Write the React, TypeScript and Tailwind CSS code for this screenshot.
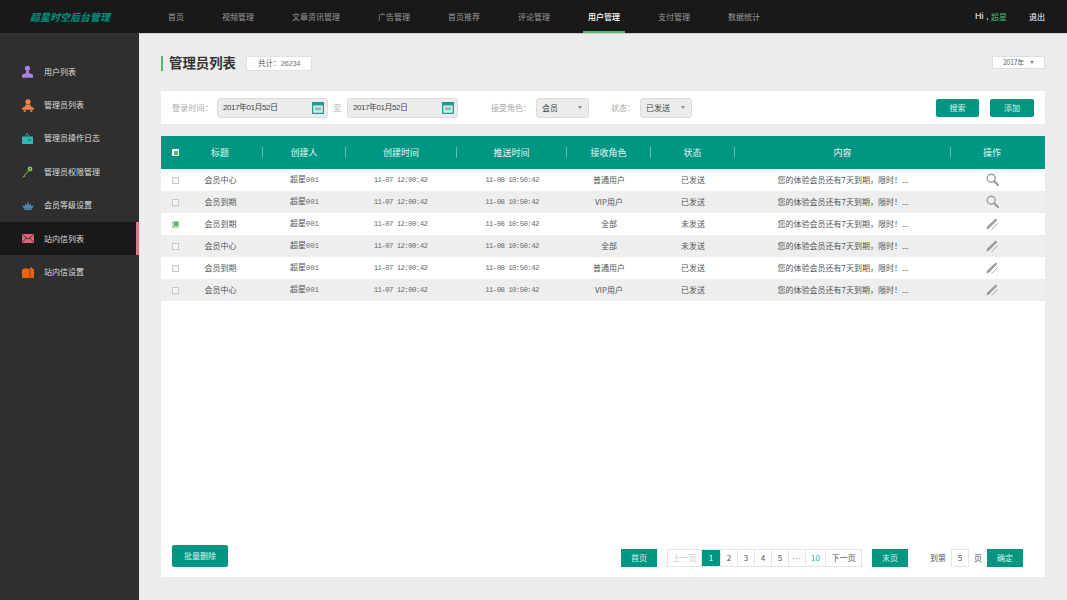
import React from "react";

const cn = "font-['Noto_Sans_CJK_SC',sans-serif]";
const mono = "font-['Liberation_Mono','Noto_Sans_CJK_SC',monospace]";

const navs = ["首页", "视频管理", "文章资讯管理", "广告管理", "首页推荐", "评论管理", "用户管理", "支付管理", "数据统计"];

const icons: Record<string, React.ReactNode> = {
  user: (
    <svg width="11" height="13" viewBox="0 0 12 14"><circle cx="6" cy="3.4" r="2.8" fill="#a97fe0" /><path d="M4.6 5.5h2.8l.4 3.3 3 .9c.8.3 1.2 1 1.2 1.8v2.2H0v-2.2c0-.8.4-1.5 1.2-1.8l3-.9z" fill="#a97fe0" /></svg>
  ),
  admin: (
    <svg width="12" height="13" viewBox="0 0 12 13"><circle cx="6" cy="2.8" r="2.6" fill="#f0844a" /><path d="M3.5 5.6h5l.3 2 2.2.8c.6.3 1 .8 1 1.4v1H0v-1c0-.6.4-1.1 1-1.4l2.2-.8z" fill="#f0844a" /><rect x="1.6" y="11.2" width="2.2" height="1.6" fill="#f0844a" /><rect x="8.2" y="11.2" width="2.2" height="1.6" fill="#f0844a" /></svg>
  ),
  log: (
    <svg width="11" height="11" viewBox="0 0 11 11"><path d="M0 3.5h11V11H0z" fill="#2fb8b8" /><path d="M3 3.5 5 .5l2.5 3" fill="none" stroke="#2fb8b8" strokeWidth="1" /><rect x="6" y="6" width="3" height="2" fill="#1c8f90" /></svg>
  ),
  key: (
    <svg width="11" height="12" viewBox="0 0 11 12"><path d="M.5 11.5 6.8 4.5" stroke="#8cc152" strokeWidth="1" fill="none" /><path d="M2 9.8l1.2 1" stroke="#8cc152" strokeWidth="1" /><circle cx="8" cy="3" r="2.4" fill="#8cc152" /><circle cx="8" cy="3" r=".7" fill="#2f2f2f" /></svg>
  ),
  crown: (
    <svg width="12" height="9" viewBox="0 0 12 9"><path d="M0 4l2.5 1.2L3.6 2.6l1.2 1.6L6 0l1.2 4.2 1.2-1.6 1.1 2.6L12 4l-1.8 3.8H1.8z" fill="#4b87a8" /><rect x="2.5" y="8" width="7" height="1" fill="#4b87a8" /></svg>
  ),
  mail: (
    <svg width="12" height="9" viewBox="0 0 12 9"><rect width="12" height="9" rx="1" fill="#e4627e" /><path d="M.5.8 6 5l5.5-4.2M.5 8.2 4.3 4M11.5 8.2 7.7 4" stroke="#2a1a1e" strokeWidth=".8" fill="none" /></svg>
  ),
  box: (
    <svg width="12" height="11" viewBox="0 0 12 11"><path d="M0 2.5 4 1l1.5 1H7L9.5 0 11 2l1 .5V10a1 1 0 0 1-1 1H1a1 1 0 0 1-1-1z" fill="#f0640f" /><path d="M8 2v9" stroke="#2f2f2f" strokeWidth=".6" /></svg>
  ),
};

const sideItems = [
  ["user", "用户列表"],
  ["admin", "管理员列表"],
  ["log", "管理员操作日志"],
  ["key", "管理员权限管理"],
  ["crown", "会员等级设置"],
  ["mail", "站内信列表"],
  ["box", "站内信设置"],
];

const Calendar = () => (
  <svg width="12" height="12" viewBox="0 0 12 12" className="shrink-0">
    <rect width="12" height="12" fill="#1d9c8c" />
    <rect x="1.2" y="3.4" width="9.6" height="7.4" fill="#cfe9e4" />
    <rect x="3" y="5.4" width="6" height="2.8" fill="#7cc7bb" />
  </svg>
);

const Caret = ({ c = "#888" }: { c?: string }) => (
  <span className="w-0 h-0 border-x-[2.5px] border-x-transparent border-t-[3px]" style={{ borderTopColor: c }} />
);

const DateInput = () => (
  <div className="w-[111px] h-5 bg-[#ececec] border border-[#dcdcdc] rounded-[3px] flex items-center justify-between pl-[5px] pr-[3px] text-[8px] tracking-[-0.45px] text-[#444]">
    <span className="font-['Liberation_Sans','Noto_Sans_CJK_SC',sans-serif]">2017年01月52日</span>
    <Calendar />
  </div>
);

const Select = ({ label, w }: { label: string; w: string }) => (
  <div className={`${w} h-5 bg-[#ececec] border border-[#dcdcdc] rounded-[3px] flex items-center justify-between pl-[5px] pr-[6px] text-[8px] text-[#444]`}>
    <span>{label}</span>
    <Caret />
  </div>
);

const Label = ({ children, cls }: { children: React.ReactNode; cls: string }) => (
  <span className={`text-[8px] text-[#aaa] whitespace-nowrap ${cls}`}>{children}</span>
);

const Btn = ({ children, cls }: { children: React.ReactNode; cls: string }) => (
  <div className={`bg-[#009682] text-white/85 text-[8px] flex items-center justify-center ${cls}`}>{children}</div>
);

const cols = "grid grid-cols-[16px_86px_83px_111px_110px_84px_84px_216px_94px]";
const heads = ["标题", "创建人", "创建时间", "推送时间", "接收角色", "状态", "内容", "操作"];

const rows = [
  ["会员中心", "普通用户", "已发送", "s", false],
  ["会员到期", "VIP用户", "已发送", "s", false],
  ["会员到期", "全部", "未发送", "e", true],
  ["会员中心", "全部", "未发送", "e", false],
  ["会员到期", "普通用户", "已发送", "e", false],
  ["会员中心", "VIP用户", "已发送", "e", false],
] as const;

const Search = () => (
  <svg width="13" height="13" viewBox="0 0 13 13" fill="none" stroke="#9c9c9c" className="-mt-[2px]">
    <circle cx="5.2" cy="5.2" r="4" strokeWidth="1.4" />
    <path d="M8.2 8.2 12 12" strokeWidth="2" strokeLinecap="round" />
  </svg>
);

const Pen = () => (
  <svg width="12" height="12" viewBox="0 0 12 12" fill="none">
    <path d="M.5 11.5 1 8.8 9.6.6l1.8 1.5L3 10.6z" fill="#9c9c9c" />
    <path d="M6 11.4 11.5 5.5" stroke="#a8a8a8" strokeWidth="1" strokeLinecap="round" />
  </svg>
);

const Check = ({ on, head }: { on?: boolean; head?: boolean }) => (
  <span className={`w-[7px] h-[7px] shrink-0 flex items-center justify-center border ${head ? "bg-white border-white" : on ? "border-[#c4c4c4] bg-[#d4d4d4]" : "border-[#c8c8c8] bg-[#f6f6f6]"}`}>
    {(on || head) && <span className="block w-[4px] h-[4px] bg-[#4cb96b]" />}
  </span>
);

const pages = [
  ["上一页", "w-[34px] text-[#c8c8c8]"],
  ["1", "w-[19px] bg-[#009682] text-white"],
  ["2", "w-[17px]"],
  ["3", "w-[17px]"],
  ["4", "w-[17px]"],
  ["5", "w-[17px]"],
  ["...", "w-[17px] tracking-[1px] font-['Liberation_Sans',sans-serif] pb-[2px]"],
  ["10", "w-[20px] text-[#2aa896]"],
  ["下一页", "w-[35px]"],
];

export default function App() {
  return (
    <div className={`w-[1067px] h-[600px] overflow-hidden flex flex-col bg-[#ececec] ${cn}`}>
      <header className="h-[33px] shrink-0 bg-[#191919] flex items-center">
        <div className="w-[168px] shrink-0 pl-[30px] text-[10px] font-bold italic text-[#00907e]">超星时空后台管理</div>
        <nav className="flex gap-[38px] h-full items-center">
          {navs.map((n) => (
            <div key={n} className="relative h-full flex items-center text-[8px] whitespace-nowrap">
              <span className={n === "用户管理" ? "text-white font-medium" : "text-[#9a9a9a]"}>{n}</span>
              {n === "用户管理" && <span className="absolute left-[-5px] right-[-5px] bottom-0 h-[2px] bg-[#4cb96b]" />}
            </div>
          ))}
        </nav>
        <div className="ml-auto pr-[22px] flex items-center text-[8px] text-white">
          <span className="text-[9px] whitespace-pre font-['Liberation_Sans',sans-serif]">Hi , </span>
          <span className="text-[#4cb96b]">超星</span>
          <span className="ml-[22px]">退出</span>
        </div>
      </header>
      <div className="flex-1 flex min-h-0">
        <aside className="w-[139px] shrink-0 bg-[#2f2f2f] pt-[22px]">
          {sideItems.map(([ic, t]) => {
            const on = t === "站内信列表";
            return (
              <div key={t} className={`relative h-[33.4px] flex items-center pl-[22px] ${on ? "bg-[#191919]" : ""}`}>
                <span className="w-[22px] flex items-center">{icons[ic]}</span>
                <span className="text-[8px] text-[#dedede]">{t}</span>
                {on && <span className="absolute right-0 top-0 bottom-0 w-[3px] bg-[#e4708a]" />}
              </div>
            );
          })}
        </aside>
        <main className="flex-1 min-w-0 flex flex-col px-[22px] pt-[21px] pb-[23px] border-t border-t-[#cfcfcf]">
          <div className="h-[16px] flex items-center shrink-0">
            <span className="w-[2px] h-[15px] bg-[#4cb96b]" />
            <h1 className="ml-[6px] text-[13.4px] font-bold text-[#333] leading-none">管理员列表</h1>
            <div className="ml-[10px] w-[66px] h-[15px] bg-white border border-[#e0e0e0] rounded-[2px] flex items-center justify-center text-[7.5px] text-[#555]">
              <span className="leading-[13px]">共计：<span className={`${mono} text-[#777] tracking-[-0.6px]`}>26234</span></span>
            </div>
            <div className="ml-auto mb-[1px] w-[53px] h-[13px] bg-white border border-[#dedede] flex items-center justify-center gap-[6px] text-[7px] tracking-[-0.3px] text-[#666]">
              2017年 <Caret />
            </div>
          </div>
          <div className="mt-[20px] h-[33px] shrink-0 bg-white flex items-center pl-[11px] pr-[11px]">
            <Label cls="w-[45px] tracking-[0.2px]">登录时间：</Label>
            <DateInput />
            <Label cls="w-[19px] text-center">至</Label>
            <DateInput />
            <Label cls="ml-[33px] w-[45px]">接受角色：</Label>
            <Select label="会员" w="w-[53px]" />
            <Label cls="ml-[22px] w-[29px]">状态：</Label>
            <Select label="已发送" w="w-[52px]" />
            <Btn cls="ml-auto w-[43px] h-[18px] rounded-[2px]">搜索</Btn>
            <Btn cls="ml-[11px] w-[44px] h-[18px] rounded-[2px]">添加</Btn>
          </div>
          <div className="mt-[12px] flex-1 min-h-0 bg-white flex flex-col">
            <div className={`${cols} h-[33px] bg-[#009682] items-center text-[9px] text-white/90`}>
              <div className="pl-[11px] overflow-visible"><Check head /></div>
              {heads.map((h, i) => (
                <div key={h} className={`text-center leading-[11px] ${i === 0 ? "pl-[1px]" : ""} ${i < 7 ? "border-r border-r-white/40" : "pr-[12px]"}`}>{h}</div>
              ))}
            </div>
            {rows.map((r, i) => (
              <div key={i} className={`${cols} h-[22px] items-center text-[8px] text-[#555] ${i % 2 ? "bg-[#eeeeee]" : "bg-white"}`}>
                <div className="pl-[11px] flex"><Check on={r[4]} /></div>
                <div className="text-center pl-[1px]">{r[0]}</div>
                <div className={`text-center ${mono} tracking-[-0.1px]`}>超星<span className="text-[7.5px] text-[#6a6a6a]">001</span></div>
                <div className={`text-center text-[7.4px] tracking-[-0.6px] pt-[1px] pr-[2px] text-[#6a6a6a] ${mono}`}>11-07 12:00:42</div>
                <div className={`text-center text-[7.4px] tracking-[-0.6px] pt-[1px] text-[#6a6a6a] ${mono}`}>11-08 10:50:42</div>
                <div className="text-center">{r[1]}</div>
                <div className="text-center">{r[2]}</div>
                <div className="text-center whitespace-nowrap">您的体验会员还有7天到期，限时！...</div>
                <div className="flex justify-center pr-[12px]">{r[3] === "s" ? <Search /> : <Pen />}</div>
              </div>
            ))}
            <div className="mt-auto h-[23px] mb-[10px] flex items-end pl-[11px] pr-[22px] text-[8px] text-[#555]">
              <Btn cls="w-[56px] h-[22px] rounded-[2px]">批量删除</Btn>
              <Btn cls="ml-auto w-[36px] h-[18px]">首页</Btn>
              <div className="ml-[10px] flex h-[18px] border border-[#e4e4e4]">
                {pages.map(([p, c], i) => (
                  <div key={i} className={`flex items-center justify-center border-r border-r-[#e4e4e4] last:border-r-0 ${c}`}>{p}</div>
                ))}
              </div>
              <Btn cls="ml-[10px] w-[36px] h-[18px]">末页</Btn>
              <span className="ml-[22px] h-[18px] leading-[18px]">到第</span>
              <div className="ml-[5px] w-[18px] h-[18px] border border-[#e4e4e4] flex items-center justify-center">5</div>
              <span className="ml-[5px] h-[18px] leading-[18px]">页</span>
              <Btn cls="ml-[5px] w-[36px] h-[18px]">确定</Btn>
            </div>
          </div>
        </main>
      </div>
    </div>
  );
}
